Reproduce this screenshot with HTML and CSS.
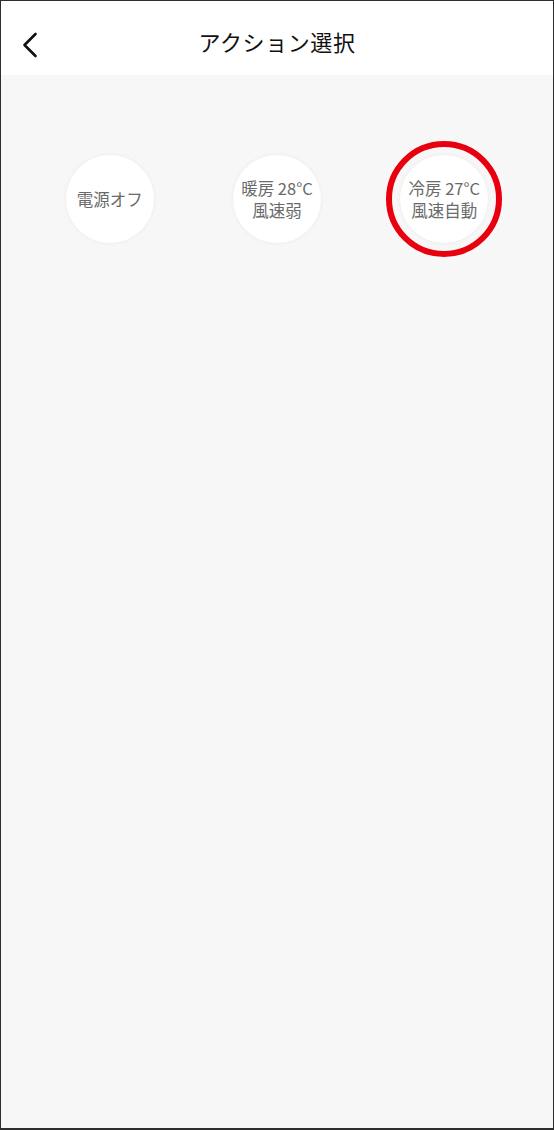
FILE: index.html
```html
<!DOCTYPE html>
<html lang="ja">
<head>
    <meta charset="UTF-8">
    <meta name="viewport" content="width=device-width, initial-scale=1.0">
    <title>アクション選択</title>
    <link rel="stylesheet" href="styles.css">
</head>
<body>

    <div class="screen">
        <header class="title-bar">
            <a href="#" class="back-btn" aria-label="戻る">
                <svg width="16" height="26" viewBox="0 0 16 26">
                    <path d="M13.5 2 L2.5 13 L13.5 24" fill="none" stroke="#111" stroke-width="2.6" stroke-linecap="round" stroke-linejoin="round"/>
                </svg>
            </a>
            <h1>アクション選択</h1>
        </header>

        <div class="actions">
            <div class="action">
                <button class="action-btn">電源オフ</button>
            </div>
            <div class="action">
                <button class="action-btn">暖房 28°C<br>風速弱</button>
            </div>
            <div class="action">
                <button class="action-btn selected">冷房 27°C<br>風速自動</button>
            </div>
        </div>
    </div>

</body>
</html>
```

FILE: styles.css
```css
html, body {
    margin: 0;
    height: 100%;
}
body {
    font-family: "Noto Sans CJK JP", "Noto Sans", sans-serif;
    background-color: #2e2e2e;
}
.screen {
    box-sizing: border-box;
    height: 100%;
    border: 1px solid #2e2e2e;
    border-bottom-width: 2px;
    background-color: #f7f7f7;
}
.title-bar {
    position: relative;
    box-sizing: border-box;
    height: 74px;
    padding-top: 6px;
    background-color: #ffffff;
    display: flex;
    align-items: center;
    justify-content: center;
}
.title-bar h1 {
    margin: 0;
    font-size: 22px;
    font-weight: 400;
    color: #111;
    letter-spacing: 0.6px;
}
.back-btn {
    position: absolute;
    left: 21px;
    top: 31px;
    display: block;
    line-height: 0;
}
.actions {
    display: grid;
    grid-template-columns: repeat(3, 1fr);
    padding: 80px 25px 0;
}
.action {
    display: flex;
    justify-content: center;
}
.action-btn {
    width: 88px;
    height: 88px;
    border: none;
    border-radius: 50%;
    background-color: #ffffff;
    box-shadow: 0 0 4px rgba(0, 0, 0, 0.06);
    font-family: inherit;
    font-size: 16.5px;
    line-height: 22px;
    color: #6a6a6a;
    padding: 0;
    cursor: pointer;
}
.action-btn.selected {
    outline: 6px solid #e8000f; /* highlight ring */
    outline-offset: 8px;
}
```
